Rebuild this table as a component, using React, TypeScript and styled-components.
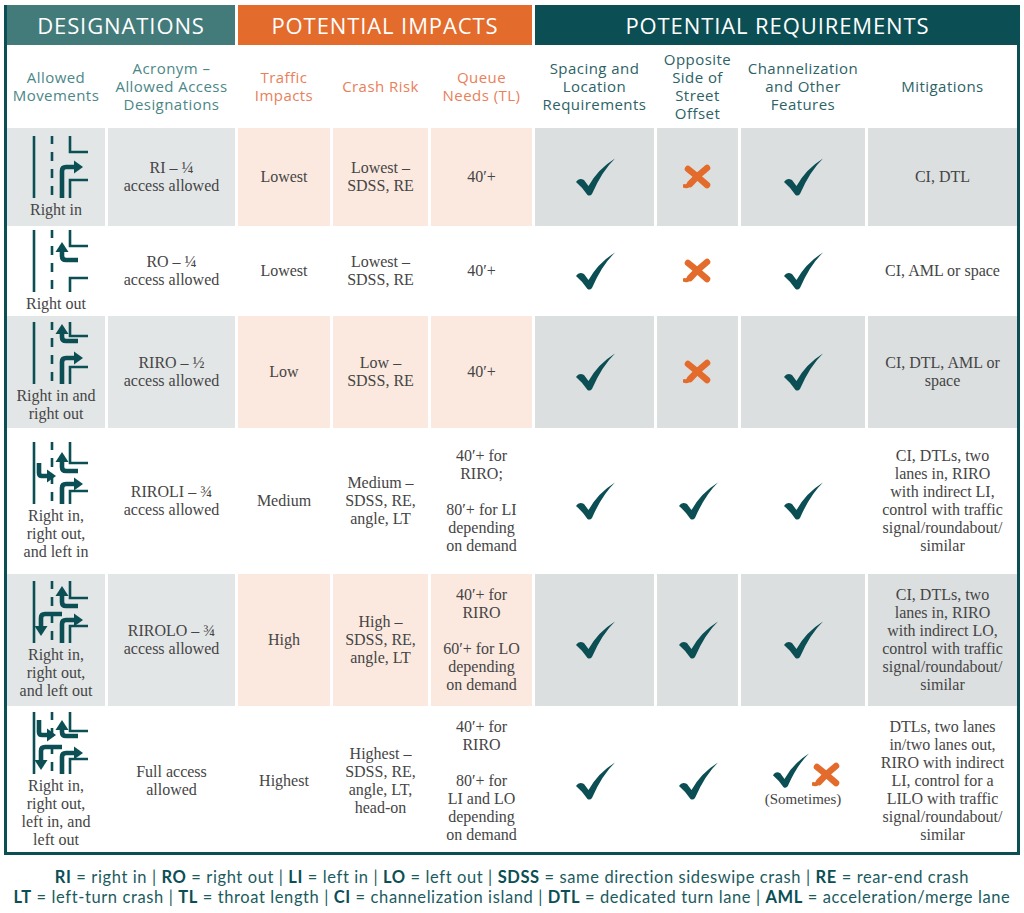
import React from "react";
import styled, { createGlobalStyle } from "styled-components";

const GlobalStyle = createGlobalStyle`
  body {
    margin: 0;
    background: #ffffff;
  }
`;

const TEAL = "#0b4f55";
const MID_TEAL = "#437b7b";
const ORANGE = "#e36b2c";

const Page = styled.div`
  width: 1024px;
  padding: 5px 4px 0 4px;
  box-sizing: border-box;
`;

const Frame = styled.div`
  border: 3px solid ${TEAL};
  border-top: none;
`;

const Grid = styled.div`
  display: grid;
  grid-template-columns: 98px 127px 92px 95px 101px 119px 81px 124px 149px;
  grid-template-rows: 40px 77px 98px 84px 112px 140px 132px 143px;
  gap: 3px;
  background: #ffffff;
`;

const Band = styled.div<{ $tone: string; $span: number; $bleed?: boolean }>`
  grid-column: span ${(p) => p.$span};
  background: ${(p) => p.$tone};
  color: #ffffff;
  font-family: "Open Sans", sans-serif;
  font-size: 22px;
  letter-spacing: 0.9px;
  display: flex;
  align-items: center;
  justify-content: center;
  margin-right: ${(p) => (p.$bleed ? "-3px" : "0")};
`;

const SubHead = styled.div<{ $tone: string }>`
  color: ${(p) => p.$tone};
  font-family: "Open Sans", sans-serif;
  font-size: 15px;
  letter-spacing: 0.45px;
  line-height: 17px;
  text-align: center;
  display: flex;
  align-items: center;
  justify-content: center;
`;

const Cell = styled.div<{ $bg: string }>`
  background: ${(p) => p.$bg};
  color: #454545;
  font-family: "Liberation Serif", serif;
  font-size: 16px;
  line-height: 18px;
  text-align: center;
  display: flex;
  flex-direction: column;
  align-items: center;
  justify-content: center;
`;

const MoveCell = styled(Cell)`
  gap: 3px;
`;

const Line = styled.span`
  display: block;
  min-height: 18px;
`;

const Pair = styled.div`
  display: flex;
  align-items: flex-end;
  gap: 3px;
  margin-left: 6px;
`;

const Note = styled.span`
  display: block;
  font-size: 15px;
  margin-top: 2px;
`;

const IconWrap = styled.svg`
  display: block;
  margin-left: 8px;
`;

const Footer = styled.div`
  margin-top: 12px;
  text-align: center;
  font-family: Lato, sans-serif;
  font-size: 16.5px;
  letter-spacing: 0.6px;
  line-height: 20px;
  color: #1b5b60;
`;

const FootLine = styled.div`
  white-space: nowrap;
`;

const Abbr = styled.b`
  font-weight: 700;
  color: ${TEAL};
`;

type Mark = "check" | "cross" | "sometimes";

interface Moves {
  ri?: number;
  ro?: [number, number];
  li?: [number, number];
  lo?: [number, number];
  corners: [number, number];
}

interface RowData {
  moves: Moves;
  label: string[];
  acronym: string[];
  traffic: string[];
  crash: string[];
  queue: string[];
  spacing: Mark;
  opposite: Mark;
  channel: Mark;
  mitigations: string[];
  shaded: boolean;
}

const rows: RowData[] = [
  {
    moves: { ri: 31, corners: [16, 44] },
    label: ["Right in"],
    acronym: ["RI – ¼", "access allowed"],
    traffic: ["Lowest"],
    crash: ["Lowest –", "SDSS, RE"],
    queue: ["40′+"],
    spacing: "check",
    opposite: "cross",
    channel: "check",
    mitigations: ["CI, DTL"],
    shaded: true,
  },
  {
    moves: { ro: [30, 12], corners: [16, 48] },
    label: ["Right out"],
    acronym: ["RO – ¼", "access allowed"],
    traffic: ["Lowest"],
    crash: ["Lowest –", "SDSS, RE"],
    queue: ["40′+"],
    spacing: "check",
    opposite: "cross",
    channel: "check",
    mitigations: ["CI, AML or space"],
    shaded: false,
  },
  {
    moves: { ro: [19, 2], ri: 36, corners: [14, 45] },
    label: ["Right in and", "right out"],
    acronym: ["RIRO – ½", "access allowed"],
    traffic: ["Low"],
    crash: ["Low –", "SDSS, RE"],
    queue: ["40′+"],
    spacing: "check",
    opposite: "cross",
    channel: "check",
    mitigations: ["CI, DTL, AML or", "space"],
    shaded: true,
  },
  {
    moves: { ro: [29, 10], li: [34, 21], ri: 42, corners: [21, 49] },
    label: ["Right in,", "right out,", "and left in"],
    acronym: ["RIROLI – ¾", "access allowed"],
    traffic: ["Medium"],
    crash: ["Medium –", "SDSS, RE,", "angle, LT"],
    queue: ["40′+ for", "RIRO;", "", "80′+ for LI", "depending", "on demand"],
    spacing: "check",
    opposite: "check",
    channel: "check",
    mitigations: [
      "CI, DTLs, two",
      "lanes in, RIRO",
      "with indirect LI,",
      "control with traffic",
      "signal/roundabout/",
      "similar",
    ],
    shaded: false,
  },
  {
    moves: { ro: [25, 5], lo: [33, 55], ri: 39, corners: [17, 45] },
    label: ["Right in,", "right out,", "and left out"],
    acronym: ["RIROLO – ¾", "access allowed"],
    traffic: ["High"],
    crash: ["High –", "SDSS, RE,", "angle, LT"],
    queue: ["40′+ for", "RIRO", "", "60′+ for LO", "depending", "on demand"],
    spacing: "check",
    opposite: "check",
    channel: "check",
    mitigations: [
      "CI, DTLs, two",
      "lanes in, RIRO",
      "with indirect LO,",
      "control with traffic",
      "signal/roundabout/",
      "similar",
    ],
    shaded: true,
  },
  {
    moves: { li: [23, 8], ro: [24, 8], lo: [35, 58], ri: 41, corners: [19, 47] },
    label: ["Right in,", "right out,", "left in, and", "left out"],
    acronym: ["Full access", "allowed"],
    traffic: ["Highest"],
    crash: ["Highest –", "SDSS, RE,", "angle, LT,", "head-on"],
    queue: ["40′+ for", "RIRO", "", "80′+ for", "LI and LO", "depending", "on demand"],
    spacing: "check",
    opposite: "check",
    channel: "sometimes",
    mitigations: [
      "DTLs, two lanes",
      "in/two lanes out,",
      "RIRO with indirect",
      "LI, control for a",
      "LILO with traffic",
      "signal/roundabout/",
      "similar",
    ],
    shaded: false,
  },
];

const Check = ({ w = 40 }: { w?: number }) => (
  <svg width={w} height={(w * 38) / 40} viewBox="0 0 40 38">
    <path
      d="M1 24 Q4 19 9 22 L13.5 28 Q23 11 40 0.5 Q27 13 17 36 Q15 38.5 12.5 37 Q8 30 1 24 Z"
      fill={TEAL}
    />
  </svg>
);

const Cross = () => (
  <svg width={29} height={26} viewBox="0 0 29 26">
    <g stroke={ORANGE} strokeLinecap="round" fill="none">
      <path d="M5 5 Q14 12 24 21" strokeWidth={6.5} />
      <path d="M24 4 Q15 11 7 20" strokeWidth={6.5} />
      <path d="M7 20 Q4 23 1.5 22" strokeWidth={4} />
    </g>
  </svg>
);

const MarkView = ({ mark }: { mark: Mark }) => {
  if (mark === "check") return <Check />;
  if (mark === "cross") return <Cross />;
  return (
    <>
      <Pair>
        <Check w={37} />
        <Cross />
      </Pair>
      <Note>(Sometimes)</Note>
    </>
  );
};

const MoveIcon = ({ moves }: { moves: Moves }) => {
  const [up, low] = moves.corners;
  return (
    <IconWrap width={60} height={62} viewBox="0 0 60 62">
      <g stroke={TEAL} fill="none">
        <line x1={4} y1={0} x2={4} y2={62} strokeWidth={2.6} />
        <line x1={22} y1={0} x2={22} y2={62} strokeWidth={2.6} strokeDasharray="9 8" strokeDashoffset={1} />
        <path d={`M40 0 V${up} H58`} strokeWidth={2.6} />
        <path d={`M40 62 V${low} H58`} strokeWidth={2.6} />
      </g>
      <g stroke={TEAL} fill="none" strokeWidth={4.6}>
        {moves.ro && <path d={`M48 ${moves.ro[0]} H36 Q32 ${moves.ro[0]} 32 ${moves.ro[0] - 4} V${moves.ro[1] + 8}`} />}
        {moves.ri !== undefined && <path d={`M32 62 V${moves.ri + 4} Q32 ${moves.ri} 36 ${moves.ri} H45`} />}
        {moves.li && <path d={`M9 ${moves.li[1]} V${moves.li[0] - 3} Q9 ${moves.li[0]} 12 ${moves.li[0]} H17`} />}
        {moves.lo && <path d={`M32 ${moves.lo[0]} H15 Q11 ${moves.lo[0]} 11 ${moves.lo[0] + 4} V${moves.lo[1] - 8}`} />}
      </g>
      <g fill={TEAL}>
        {moves.ro && (
          <polygon points={`32,${moves.ro[1]} 25.5,${moves.ro[1] + 10} 38.5,${moves.ro[1] + 10}`} />
        )}
        {moves.ri !== undefined && (
          <polygon points={`53,${moves.ri} 44,${moves.ri - 6.5} 44,${moves.ri + 6.5}`} />
        )}
        {moves.li && <polygon points={`26,${moves.li[0]} 17,${moves.li[0] - 6.5} 17,${moves.li[0] + 6.5}`} />}
        {moves.lo && <polygon points={`11,${moves.lo[1]} 4.5,${moves.lo[1] - 10} 17.5,${moves.lo[1] - 10}`} />}
      </g>
    </IconWrap>
  );
};

const Lines = ({ items }: { items: string[] }) => (
  <>
    {items.map((t, i) => (
      <Line key={i}>{t}</Line>
    ))}
  </>
);

const subHeads: { tone: string; lines: string[] }[] = [
  { tone: "#4b8787", lines: ["Allowed", "Movements"] },
  { tone: "#4b8787", lines: ["Acronym –", "Allowed Access", "Designations"] },
  { tone: "#e9805a", lines: ["Traffic", "Impacts"] },
  { tone: "#e9805a", lines: ["Crash Risk"] },
  { tone: "#e9805a", lines: ["Queue", "Needs (TL)"] },
  { tone: "#2d6266", lines: ["Spacing and", "Location", "Requirements"] },
  { tone: "#2d6266", lines: ["Opposite", "Side of", "Street", "Offset"] },
  { tone: "#2d6266", lines: ["Channelization", "and Other", "Features"] },
  { tone: "#2d6266", lines: ["Mitigations"] },
];

const GREY_A = "#e3e6e7";
const PEACH = "#fbe9df";
const GREY_B = "#dcdfe0";

const App = () => (
  <Page>
    <GlobalStyle />
    <Frame>
      <Grid>
        <Band $tone={MID_TEAL} $span={2}>
          DESIGNATIONS
        </Band>
        <Band $tone={ORANGE} $span={3}>
          POTENTIAL IMPACTS
        </Band>
        <Band $tone={TEAL} $span={4} $bleed>
          POTENTIAL REQUIREMENTS
        </Band>

        {subHeads.map((s, i) => (
          <SubHead key={i} $tone={s.tone}>
            <div>
              <Lines items={s.lines} />
            </div>
          </SubHead>
        ))}

        {rows.map((r, i) => {
          const a = r.shaded ? GREY_A : "#ffffff";
          const p = r.shaded ? PEACH : "#ffffff";
          const b = r.shaded ? GREY_B : "#ffffff";
          return (
            <React.Fragment key={i}>
              <MoveCell $bg={a}>
                <MoveIcon moves={r.moves} />
                <div>
                  <Lines items={r.label} />
                </div>
              </MoveCell>
              <Cell $bg={a}>
                <Lines items={r.acronym} />
              </Cell>
              <Cell $bg={p}>
                <Lines items={r.traffic} />
              </Cell>
              <Cell $bg={p}>
                <Lines items={r.crash} />
              </Cell>
              <Cell $bg={p}>
                <Lines items={r.queue} />
              </Cell>
              <Cell $bg={b}>
                <MarkView mark={r.spacing} />
              </Cell>
              <Cell $bg={b}>
                <MarkView mark={r.opposite} />
              </Cell>
              <Cell $bg={b}>
                <MarkView mark={r.channel} />
              </Cell>
              <Cell $bg={b}>
                <Lines items={r.mitigations} />
              </Cell>
            </React.Fragment>
          );
        })}
      </Grid>
    </Frame>
    <Footer>
      <FootLine>
        <Abbr>RI</Abbr> = right in | <Abbr>RO</Abbr> = right out | <Abbr>LI</Abbr> = left in | <Abbr>LO</Abbr> =
        left out | <Abbr>SDSS</Abbr> = same direction sideswipe crash | <Abbr>RE</Abbr> = rear-end crash
      </FootLine>
      <FootLine>
        <Abbr>LT</Abbr> = left-turn crash | <Abbr>TL</Abbr> = throat length | <Abbr>CI</Abbr> = channelization
        island | <Abbr>DTL</Abbr> = dedicated turn lane | <Abbr>AML</Abbr> = acceleration/merge lane
      </FootLine>
    </Footer>
  </Page>
);

export default App;
